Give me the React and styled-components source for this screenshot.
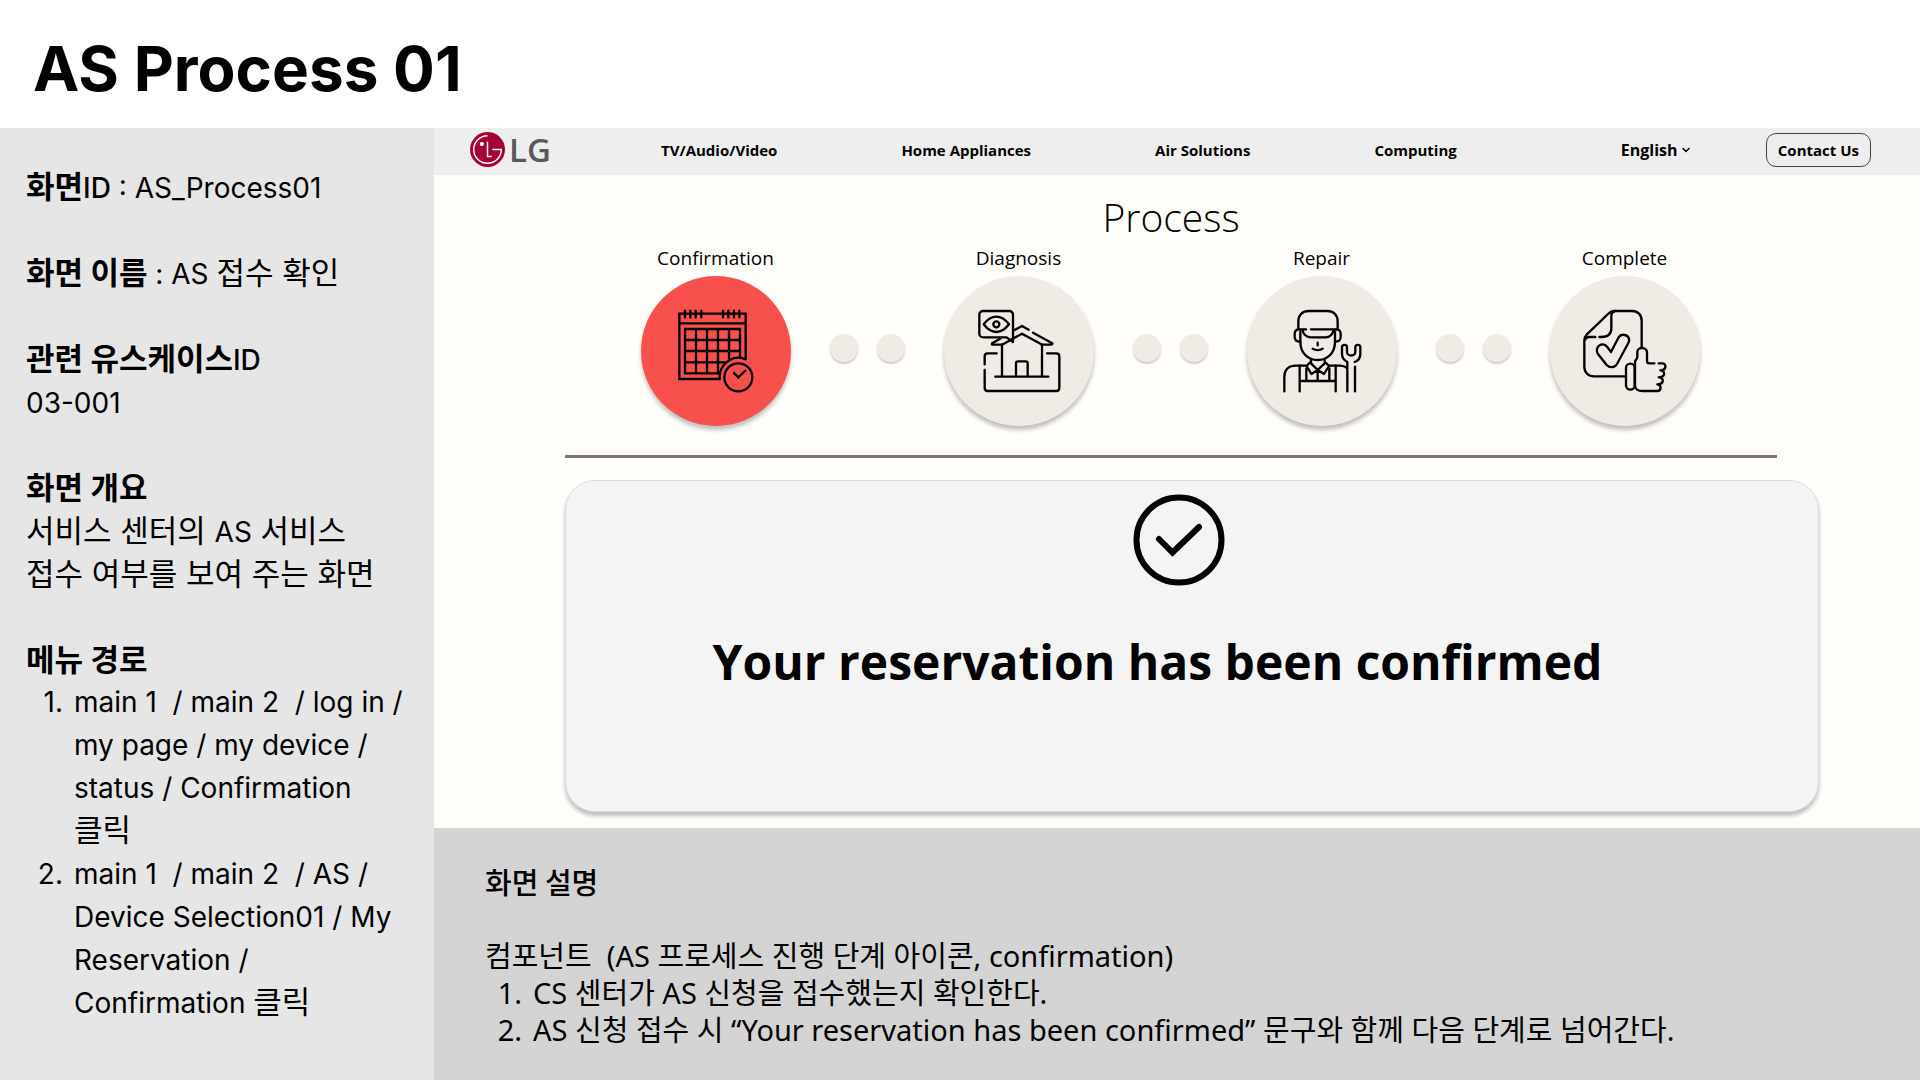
import React from "react";
import styled, { createGlobalStyle } from "styled-components";
import { ChevronDown } from "lucide-react";

const GlobalStyle = createGlobalStyle`
  *, *::before, *::after { box-sizing: border-box; }
  body { margin: 0; background: #ffffff; color: #000000; }
  h1, h2, h3, p, ul, ol, dl, dd { margin: 0; padding: 0; }
  ul, ol { list-style: none; }
`;

const ui = `"Open Sans", "Noto Sans CJK KR", sans-serif`;
const doc = `Inter, "Noto Sans CJK KR", sans-serif`;

const Page = styled.div`
  min-height: 100vh;
  display: flex;
  flex-direction: column;
`;

const PageHeader = styled.header`
  height: 128px;
  padding: 10px 33px 0;
  display: flex;
  align-items: center;
`;

const PageTitle = styled.h1`
  font: 700 62px/80px ${doc};
`;

const Body = styled.div`
  flex: 1;
  display: grid;
  grid-template-columns: 434px minmax(0, 1fr);
`;

const Sidebar = styled.aside`
  background: #e6e6e6;
  padding: 37px 24px 24px 26px;
  display: flex;
  flex-direction: column;
  gap: 43px;
  font: 400 31px/43px ${doc};
`;

const Term = styled.h2`
  display: ${(p) => (p.$inline ? "inline" : "block")};
  height: 43px;
  font: 700 31px/43px ${doc};
`;

const Latin = styled.span`
  font-size: 28px;
  line-height: 1;
  font-weight: ${(p) => (p.$strong ? 500 : 400)};
`;

const Hangul = styled.span`
  font-size: 31px;
  line-height: 1;
`;

const Line = styled.span`
  display: block;
  height: 43px;
  white-space: pre;
`;

const PathList = styled.ol`
  font-size: 28px;
`;

const PathItem = styled.li`
  display: grid;
  grid-template-columns: 37px 1fr;
  column-gap: 11px;
`;

const ItemNumber = styled.span`
  text-align: right;
`;

const Screen = styled.div`
  display: flex;
  flex-direction: column;
`;

const NavBar = styled.nav`
  height: 47px;
  padding: 0 49px 4px 36px;
  background: #eeeeee;
  display: flex;
  align-items: center;
  font: 700 15px/20px ${ui};
`;

const Brand = styled.a`
  display: flex;
  align-items: center;
  gap: 4px;
  width: 191px;
  color: #58595b;
  font: 600 33px/40px ${ui};
  text-decoration: none;
`;

const NavLinks = styled.ul`
  display: flex;
  gap: 124px;
`;

const NavLink = styled.a`
  color: #000000;
  text-decoration: none;
  white-space: nowrap;
`;

const NavTools = styled.div`
  margin-left: auto;
  display: flex;
  align-items: center;
  gap: 74px;
`;

const Language = styled.label`
  display: flex;
  align-items: center;
  gap: 2px;
  font-size: 16px;
`;

const LanguageSelect = styled.select`
  appearance: none;
  border: 0;
  padding: 0;
  background: transparent;
  color: #000000;
  font: inherit;
`;

const ContactButton = styled.button`
  height: 34px;
  padding: 0 11px;
  border: 1px solid #444444;
  border-radius: 10px;
  background: transparent;
  color: #000000;
  font: inherit;
`;

const Content = styled.main`
  padding: 15px 101px 16px 131px;
  background: #fffefa;
`;

const Process = styled.section`
  margin-right: 42px;
  display: flex;
  flex-direction: column;
  align-items: center;
`;

const ProcessTitle = styled.h2`
  font: 300 39px/54px ${ui};
`;

const Steps = styled.ol`
  padding-right: 2px;
  display: flex;
  align-items: flex-end;
  gap: 39px;
`;

const Step = styled.li`
  width: 150px;
  display: flex;
  flex-direction: column;
  align-items: center;
  gap: 4px;
  font: 400 19px/28px ${ui};
`;

const StepCircle = styled.span`
  width: 150px;
  height: 150px;
  border-radius: 50%;
  background: ${(p) => (p.$active ? "#f8504d" : "#f0ebe5")};
  box-shadow: 0 4px 4px rgba(0, 0, 0, 0.25);
`;

const StepIcon = styled.svg`
  display: block;
  width: 100%;
  height: 100%;
  fill: none;
  stroke: #000000;
  stroke-width: ${(p) => p.$weight};
  stroke-linecap: ${(p) => p.$cap};
  stroke-linejoin: ${(p) => (p.$cap === "round" ? "round" : "miter")};
`;

const Dots = styled.li`
  display: flex;
  gap: 19px;
  padding-bottom: 64px;
`;

const Dot = styled.span`
  width: 28px;
  height: 28px;
  border-radius: 50%;
  background: #f0ebe5;
  box-shadow: 0 2px 2px rgba(0, 0, 0, 0.2);
`;

const Divider = styled.hr`
  width: 100%;
  height: 3px;
  margin: 29px 0 22px;
  border: 0;
  background: #7b7777;
`;

const StatusCard = styled.section`
  min-height: 332px;
  padding: 13px 27px 0 0;
  border: 1px solid #dcdcdc;
  border-radius: 30px;
  background: #f4f4f4;
  box-shadow: 0 4px 4px rgba(0, 0, 0, 0.25);
  display: flex;
  flex-direction: column;
  align-items: center;
  gap: 40px;
`;

const StatusMessage = styled.p`
  padding-right: 42px;
  font: 700 48px/72px ${ui};
  white-space: nowrap;
`;

const Description = styled.section`
  flex: 1;
  padding: 35px 51px 32px;
  background: #d4d4d4;
  font: 400 29px/37px "Noto Sans", "Noto Sans CJK KR", sans-serif;
`;

const DescriptionTitle = styled.h2`
  margin-bottom: 37px;
  font: 500 29px/37px "Noto Sans CJK KR", sans-serif;
`;

const Intro = styled.p`
  white-space: pre;
`;

const Note = styled.li`
  display: grid;
  grid-template-columns: 37px 1fr;
  column-gap: 11px;
`;

function BrandMark() {
  return (
    <svg width="35" height="35" viewBox="0 0 36 36" fill="none" aria-hidden="true">
      <circle cx="18" cy="18" r="18" fill="#a50034" />
      <path d="M18 3.8A14.2 14.2 0 1 0 32.2 18H23" stroke="#fff" strokeWidth="1.5" />
      <path d="M18 10V25.2H22.4" stroke="#fff" strokeWidth="1.5" />
      <circle cx="12.2" cy="12.4" r="2.2" fill="#fff" />
    </svg>
  );
}

function CalendarIcon() {
  return (
    <StepIcon viewBox="62 258 450 450" $weight={7} $cap="butt" aria-hidden="true">
      <path d="M376 511V371H177V567H298V556C300 528 326 503 354 503C362 503 370 505 376 508" />
      <path d="M177 400H376" />
      <path d="M194 362V382M210 362V382M226 362V382M243 362V382M308 362V382M324 362V382M341 362V382M357 362V382" strokeLinecap="round" />
      <path d="M359 503V417H194V550H298M227 417V550M260 417V550M293 417V550M326 417V508M194 450H359M194 483H359M194 517H316" />
      <circle cx="354" cy="562" r="42" />
      <path d="M339 547L354 562L377 540" />
    </StepIcon>
  );
}

function HouseIcon() {
  return (
    <StepIcon viewBox="71 258 450 450" $weight={7} $cap="round" aria-hidden="true">
      <path d="M188 363H267A11 11 0 0 1 278 374V456L259 442H188A11 11 0 0 1 177 431V374A11 11 0 0 1 188 363Z" />
      <path d="M190 403C203 386 214 380 228 380C242 380 253 386 266 403C253 420 242 426 228 426C214 426 203 420 190 403Z" />
      <circle cx="228" cy="403" r="9" />
      <path d="M281 421L305 408L325 419M338 428L396 460Q397 463 393 464H366L305 431L245 464H217Q213 463 215 460L240 446" />
      <path d="M245 464V558M365 464V558M225 560H384M287 558V520Q287 514 293 514H316Q322 514 322 520V558" />
      <path d="M193 523V499Q193 490 202 490H229M193 540V594Q193 603 202 603H408Q417 603 417 594V499Q417 490 408 490H380" />
    </StepIcon>
  );
}

function TechnicianIcon() {
  return (
    <StepIcon viewBox="50 258 450 450" $weight={7} $cap="round" aria-hidden="true">
      <path d="M204 416V395C204 375 216 363 236 363H290C310 363 322 375 322 395V416M204 418H227M242 418H322" />
      <path d="M216 420C220 434 230 442 242 442H286C298 442 306 434 310 420" />
      <path d="M206 418C196 418 193 425 193 432V440C193 450 200 455 210 455M318 418C328 418 331 425 331 432V440C331 450 326 455 314 455" />
      <path d="M210 425V455C210 488 232 510 262 510C292 510 314 488 314 455V425M262 458V466M247 476C255 482 269 482 277 476" />
      <path d="M242 508V520L262 540L283 520V508M238 518L229 528L243 552L262 540L281 552L296 528L286 518M262 540V572" />
      <path d="M162 604V560C162 540 175 527 197 527H229M296 527H330C338 527 345 530 350 534" />
      <path d="M208 527V604M228 535V572M297 535V572M316 527V604M208 573H316" />
      <path d="M351 604V516C340 510 335 503 335 492V472C335 462 350 462 350 472V486C350 500 375 500 375 486V472C375 462 390 462 390 472V492C390 505 385 512 373 516M374 530V604" />
    </StepIcon>
  );
}

function ApprovedIcon() {
  return (
    <StepIcon viewBox="150 258 450 450" $weight={7} $cap="round" aria-hidden="true">
      <path d="M425 470V392C425 374 413 363 396 363H345C336 363 330 366 324 372L260 434C255 439 253 445 253 452V530C253 548 265 559 282 559H376" />
      <path d="M255 450C257 444 261 441 268 441H286M298 441H305C323 441 334 432 334 414V378C334 370 338 366 345 363" />
      <path d="M333 486L356 442C362 432 376 432 384 440C389 447 388 453 385 459L351 522C344 534 328 534 320 525L294 492C288 483 290 471 299 466C307 461 316 464 321 470Z" />
      <rect x="378" y="521" width="26" height="78" rx="13" />
      <path d="M405 587V516C405 510 412 508 412 500V485C412 470 441 470 441 487V512C441 518 444 520 449 520H463" />
      <path d="M476 520H488C500 521 500 541 481 541C497 542 497 562 476 562C494 563 492 583 472 583C486 585 484 603 472 603H428C414 603 405 596 405 587" />
    </StepIcon>
  );
}

function ConfirmedIcon() {
  return (
    <svg width="92" height="92" viewBox="0 0 92 92" fill="none" stroke="#000" strokeWidth="6" aria-hidden="true">
      <circle cx="46" cy="46" r="42.5" />
      <path d="M26 45L39.500 58.500L66 33" strokeWidth="6" strokeLinecap="round" />
    </svg>
  );
}

const navItems = ["TV/Audio/Video", "Home Appliances", "Air Solutions", "Computing"];

const steps = [
  { name: "Confirmation", Icon: CalendarIcon, active: true },
  { name: "Diagnosis", Icon: HouseIcon },
  { name: "Repair", Icon: TechnicianIcon },
  { name: "Complete", Icon: ApprovedIcon },
];

const menuPaths = [
  ["main 1  / main 2  / log in /", "my page / my device /", "status / Confirmation", <Hangul>클릭</Hangul>],
  ["main 1  / main 2  / AS /", "Device Selection01 / My", "Reservation /", <>Confirmation <Hangul>클릭</Hangul></>],
];

const notes = [
  "CS 센터가 AS 신청을 접수했는지 확인한다.",
  "AS 신청 접수 시 “Your reservation has been confirmed” 문구와 함께 다음 단계로 넘어간다.",
];

export default function App() {
  return (
    <Page>
      <GlobalStyle />
      <PageHeader>
        <PageTitle>AS Process 01</PageTitle>
      </PageHeader>
      <Body>
        <Sidebar>
          <Line as="div">
            <Term $inline>화면<Latin $strong>ID</Latin></Term>
            <Latin> : AS_Process01</Latin>
          </Line>
          <Line as="div">
            <Term $inline>화면 이름</Term>
            <Latin> : AS </Latin>접수 확인
          </Line>
          <div>
            <Term>관련 유스케이스<Latin $strong>ID</Latin></Term>
            <Line as="p"><Latin>03-001</Latin></Line>
          </div>
          <div>
            <Term>화면 개요</Term>
            <p>
              <Line>서비스 센터의 <Latin>AS</Latin> 서비스</Line>
              <Line>접수 여부를 보여 주는 화면</Line>
            </p>
          </div>
          <div>
            <Term>메뉴 경로</Term>
            <PathList>
              {menuPaths.map((lines, i) => (
                <PathItem key={i}>
                  <ItemNumber>{i + 1}.</ItemNumber>
                  <span>
                    {lines.map((line, n) => (
                      <Line key={n}>{line}</Line>
                    ))}
                  </span>
                </PathItem>
              ))}
            </PathList>
          </div>
        </Sidebar>
        <Screen>
          <NavBar>
            <Brand href="#home">
              <BrandMark />
              LG
            </Brand>
            <NavLinks>
              {navItems.map((item) => (
                <li key={item}>
                  <NavLink href="#products">{item}</NavLink>
                </li>
              ))}
            </NavLinks>
            <NavTools>
              <Language>
                <LanguageSelect aria-label="Language" defaultValue="en">
                  <option value="en">English</option>
                </LanguageSelect>
                <ChevronDown size={12} strokeWidth={3} aria-hidden="true" />
              </Language>
              <ContactButton type="button">Contact Us</ContactButton>
            </NavTools>
          </NavBar>
          <Content>
            <Process>
              <ProcessTitle>Process</ProcessTitle>
              <Steps>
                {steps.map(({ name, Icon, active }, i) => (
                  <React.Fragment key={name}>
                    {i > 0 && (
                      <Dots aria-hidden="true">
                        <Dot />
                        <Dot />
                      </Dots>
                    )}
                    <Step>
                      {name}
                      <StepCircle $active={active}>
                        <Icon />
                      </StepCircle>
                    </Step>
                  </React.Fragment>
                ))}
              </Steps>
              <Divider />
            </Process>
            <StatusCard>
              <ConfirmedIcon />
              <StatusMessage>Your reservation has been confirmed</StatusMessage>
            </StatusCard>
          </Content>
          <Description>
            <DescriptionTitle>화면 설명</DescriptionTitle>
            <Intro>컴포넌트  (AS 프로세스 진행 단계 아이콘, confirmation)</Intro>
            <ol>
              {notes.map((note, i) => (
                <Note key={note}>
                  <ItemNumber>{i + 1}.</ItemNumber>
                  <span>{note}</span>
                </Note>
              ))}
            </ol>
          </Description>
        </Screen>
      </Body>
    </Page>
  );
}
